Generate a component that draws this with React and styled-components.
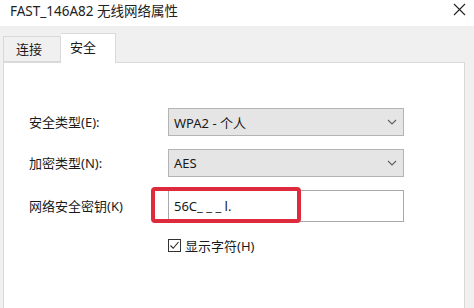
import React from "react";
import styled, { createGlobalStyle } from "styled-components";

const Global = createGlobalStyle`
  html, body { margin: 0; padding: 0; background: #f0f0f0; }
  body {
    font-family: "Noto Sans", "Noto Sans CJK SC", sans-serif;
    color: #1a1a1a;
    width: 474px;
    height: 308px;
    overflow: hidden;
  }
`;

const Window = styled.div`
  width: 474px;
  height: 308px;
  display: flex;
  flex-direction: column;
  background: #f0f0f0;
`;

const TitleBar = styled.div`
  height: 26px;
  flex: none;
  background: #ffffff;
  display: flex;
  align-items: center;
  justify-content: space-between;
  padding: 0 8px 2px 10px;
  box-sizing: border-box;
`;

const Title = styled.div`
  font-size: 13.5px;
  color: #222;
  line-height: 1;
`;

const Close = styled.div`
  width: 14px;
  height: 14px;
  display: flex;
  align-items: center;
  justify-content: center;
  margin-top: -6px;
`;

const Tabs = styled.div`
  display: flex;
  align-items: flex-end;
  padding: 7px 0 0 3px;
  height: 36px;
  box-sizing: border-box;
  flex: none;
`;

const Tab = styled.div`
  box-sizing: border-box;
  height: ${(p) => (p.$active ? "30px" : "26px")};
  width: ${(p) => (p.$active ? "55px" : "58px")};
  background: ${(p) => (p.$active ? "#ffffff" : "#f0f0f0")};
  border: 1px solid #d9d9d9;
  border-bottom: ${(p) => (p.$active ? "none" : "1px solid #d9d9d9")};
  border-left: ${(p) => (p.$active ? "none" : "1px solid #d9d9d9")};
  font-size: 13px;
  display: flex;
  align-items: center;
  padding-left: ${(p) => (p.$active ? "9px" : "12px")};
  padding-bottom: ${(p) => (p.$active ? "5px" : "2px")};
  position: relative;
  z-index: ${(p) => (p.$active ? 2 : 1)};
  margin-bottom: ${(p) => (p.$active ? "-1px" : "0")};
`;

const Panel = styled.div`
  flex: 1;
  margin: 0 9px 0 3px;
  background: #ffffff;
  border: 1px solid #d9d9d9;
  border-bottom: none;
  padding: 45px 0 0 25px;
  box-sizing: border-box;
`;

const Form = styled.div`
  display: grid;
  grid-template-columns: 139px 236px;
  grid-auto-rows: auto;
  row-gap: 13px;
  align-items: center;
`;

const Label = styled.div`
  font-size: 13px;
  line-height: 1;
`;

const Select = styled.div`
  height: 28px;
  box-sizing: border-box;
  background: #e5e5e5;
  border: 1px solid #b4b4b4;
  display: flex;
  align-items: center;
  justify-content: space-between;
  padding: 0 6px 0 5px;
  font-size: 13px;
`;

const InputWrap = styled.div`
  position: relative;
  height: 32px;
`;

const Input = styled.div`
  height: 32px;
  box-sizing: border-box;
  background: #ffffff;
  border: 1px solid #a9a9a9;
  display: flex;
  align-items: center;
  padding-left: 5px;
  font-size: 13px;
`;

const Highlight = styled.div`
  position: absolute;
  left: -17px;
  top: -3px;
  width: 150px;
  height: 36px;
  box-sizing: border-box;
  border: 4px solid #dd2a3c;
  border-radius: 4px;
  pointer-events: none;
`;

const CheckRow = styled.div`
  grid-column: 2;
  display: flex;
  align-items: center;
  gap: 4px;
  margin-top: 1px;
  font-size: 13px;
`;

const Box = styled.div`
  width: 13px;
  height: 13px;
  box-sizing: border-box;
  border: 1px solid #333;
  background: #fff;
  display: flex;
  align-items: center;
  justify-content: center;
`;

const Chevron = () => (
  <svg width="10" height="6" viewBox="0 0 10 6">
    <path d="M1 1 L5 5 L9 1" fill="none" stroke="#606060" strokeWidth="1.1" />
  </svg>
);

export default function App() {
  return (
    <>
      <Global />
      <Window>
        <TitleBar>
          <Title>FAST_146A82 无线网络属性</Title>
          <Close>
            <svg width="13" height="13" viewBox="0 0 13 13">
              <path d="M1 1 L12 12 M12 1 L1 12" stroke="#222" strokeWidth="1.1" />
            </svg>
          </Close>
        </TitleBar>
        <Tabs>
          <Tab>连接</Tab>
          <Tab $active>安全</Tab>
        </Tabs>
        <Panel>
          <Form>
            <Label>安全类型(E):</Label>
            <Select>
              <span>WPA2 - 个人</span>
              <Chevron />
            </Select>
            <Label>加密类型(N):</Label>
            <Select>
              <span>AES</span>
              <Chevron />
            </Select>
            <Label>网络安全密钥(K)</Label>
            <InputWrap>
              <Input>56C_ _ _ l.</Input>
              <Highlight />
            </InputWrap>
            <CheckRow>
              <Box>
                <svg width="11" height="11" viewBox="0 0 11 11">
                  <path d="M1.5 5.5 L4.2 8.3 L9.5 2" fill="none" stroke="#222" strokeWidth="1.1" />
                </svg>
              </Box>
              <span>显示字符(H)</span>
            </CheckRow>
          </Form>
        </Panel>
      </Window>
    </>
  );
}
